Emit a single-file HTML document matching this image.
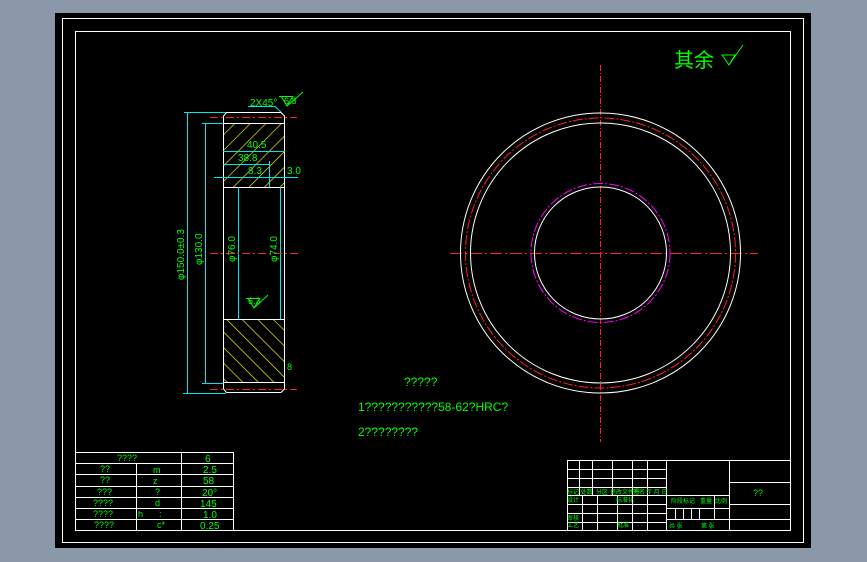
<!DOCTYPE html>
<html><head><meta charset="utf-8"><style>
html,body{margin:0;padding:0;background:#8a98aa;width:867px;height:562px;overflow:hidden}
svg{display:block}
text{font-family:"Liberation Sans Narrow","Liberation Sans","Noto Sans CJK SC",sans-serif;fill:#00ff00}
</style></head><body>
<svg width="867" height="562" viewBox="0 0 867 562">
<defs>
<pattern id="h" patternUnits="userSpaceOnUse" width="11" height="11" patternTransform="rotate(45)">
<line x1="0" y1="0" x2="0" y2="11" stroke="#ffff00" stroke-width="1.3"/>
</pattern>
<pattern id="h2" patternUnits="userSpaceOnUse" width="11" height="11" patternTransform="rotate(-45)">
<line x1="0" y1="0" x2="0" y2="11" stroke="#ffff00" stroke-width="1.3"/>
</pattern>
</defs>
<rect x="0" y="0" width="867" height="562" fill="#8a98aa"/>
<rect x="55" y="13" width="756" height="535" fill="#000"/>
<rect x="62.5" y="18.5" width="741" height="524" fill="none" stroke="#fff"/>
<rect x="75.5" y="31.5" width="715" height="499" fill="none" stroke="#fff"/>

<!-- side view -->
<rect x="223" y="123" width="62" height="64" fill="url(#h)"/>
<rect x="223" y="319" width="62" height="64" fill="url(#h2)"/>
<g stroke="#fff" fill="none" stroke-width="1">
<path d="M226.5 112.5 H281 L284.5 116 V389 L281 392.5 H226.5 L223.5 389 V116 Z"/>
<line x1="223" y1="123.5" x2="285" y2="123.5"/>
<line x1="223" y1="382.5" x2="285" y2="382.5"/>
<line x1="223" y1="187.5" x2="285" y2="187.5"/>
<line x1="223" y1="319.5" x2="285" y2="319.5"/>
</g>
<g stroke="#00e5ee" fill="none" stroke-width="1">
<line x1="238.5" y1="187" x2="238.5" y2="319"/>
<line x1="280.5" y1="187" x2="280.5" y2="319"/>
<line x1="223" y1="151.5" x2="285" y2="151.5"/>
<line x1="223" y1="164.5" x2="270" y2="164.5"/>
<line x1="214" y1="177.5" x2="298" y2="177.5"/>
<line x1="269.5" y1="161" x2="269.5" y2="187"/>
<line x1="187.5" y1="112" x2="187.5" y2="393"/>
<line x1="184" y1="112.5" x2="226" y2="112.5"/>
<line x1="183" y1="393.5" x2="226" y2="393.5"/>
<line x1="205.5" y1="123" x2="205.5" y2="383"/>
<line x1="202" y1="123.5" x2="223" y2="123.5"/>
<line x1="202" y1="383.5" x2="223" y2="383.5"/>
<line x1="248" y1="106.5" x2="275" y2="106.5"/>
<line x1="275" y1="106.5" x2="281" y2="112"/>
</g>
<line x1="210" y1="253.5" x2="300" y2="253.5" stroke="#ff2020" stroke-dasharray="8,3,2,3"/>
<line x1="210" y1="117.5" x2="297" y2="117.5" stroke="#ff2020" stroke-dasharray="8,3,2,3"/>
<line x1="210" y1="389.5" x2="297" y2="389.5" stroke="#ff2020" stroke-dasharray="8,3,2,3"/>
<g font-size="10">
<text x="250" y="106">2X45°</text>
<text x="284" y="104" font-size="9">6.3</text>
<text x="247" y="148">40.5</text>
<text x="238" y="161">38.8</text>
<text x="248" y="174">8.3</text>
<text x="287" y="174">3.0</text>
<text x="248" y="304" font-size="9">6.3</text>
<text x="287" y="370" font-size="9">8</text>
<text transform="translate(184,280) rotate(-90)">φ150.0±0.3</text>
<text transform="translate(202,265) rotate(-90)">φ130.0</text>
<text transform="translate(235,262) rotate(-90)">φ76.0</text>
<text transform="translate(277,262) rotate(-90)">φ74.0</text>
</g>
<path d="M281 96 L287 106 L293 96 M287 106 L303 92" stroke="#00ff00" fill="none"/>
<line x1="279" y1="96.5" x2="293" y2="96.5" stroke="#00ff00"/>
<path d="M248 298 L254 308 L260 298 M254 308 L268 295" stroke="#00ff00" fill="none"/>
<line x1="246" y1="298.5" x2="260" y2="298.5" stroke="#00ff00"/>

<!-- front view -->
<line x1="600.5" y1="65" x2="600.5" y2="442" stroke="#ff2020" stroke-dasharray="6,2,1,2"/>
<line x1="450" y1="253.5" x2="758" y2="253.5" stroke="#ff2020" stroke-dasharray="12,3,2,3"/>
<circle cx="600.5" cy="253" r="140" fill="none" stroke="#fff"/>
<circle cx="600.5" cy="253" r="130" fill="none" stroke="#fff"/>
<circle cx="600.5" cy="253" r="135" fill="none" stroke="#ff2020" stroke-dasharray="10,2,2,2"/>
<circle cx="600.5" cy="253" r="66" fill="none" stroke="#fff"/>
<circle cx="600.5" cy="253" r="69.5" fill="none" stroke="#ff00ff" stroke-dasharray="10,2,2,2"/>

<text x="674" y="67" font-size="20" font-family="Noto Sans CJK SC,sans-serif">其余</text>
<path d="M722 55 L729 65 L735 55 Z M729 65 L743 45" stroke="#00ff00" fill="none"/>

<g font-size="12">
<text x="404" y="386">?????</text>
<text x="358" y="411">1???????????58-62?HRC?</text>
<text x="358" y="436">2????????</text>
</g>

<!-- left table -->
<g stroke="#fff" fill="none">
<rect x="75.5" y="452.5" width="158" height="78"/>
<line x1="75" y1="463.5" x2="234" y2="463.5"/>
<line x1="75" y1="474.5" x2="234" y2="474.5"/>
<line x1="75" y1="486.5" x2="234" y2="486.5"/>
<line x1="75" y1="497.5" x2="234" y2="497.5"/>
<line x1="75" y1="508.5" x2="234" y2="508.5"/>
<line x1="75" y1="519.5" x2="234" y2="519.5"/>
<line x1="136.5" y1="463" x2="136.5" y2="530"/>
<line x1="181.5" y1="452" x2="181.5" y2="530"/>
</g>
<g font-size="9">
<text x="117" y="461">????</text><text x="205" y="462" font-size="10">6</text>
<text x="100" y="472">??</text><text x="153" y="473">m</text><text x="203" y="473" font-size="10">2.5</text>
<text x="100" y="483">??</text><text x="153" y="484" fill="#fff">z</text><text x="203" y="484" font-size="10">58</text>
<text x="97" y="495">???</text><text x="155" y="495">?</text><text x="202" y="496" font-size="10">20°</text>
<text x="93" y="506">????</text><text x="155" y="506">d</text><text x="200" y="507" font-size="10">145</text>
<text x="93" y="517">????</text><text x="138" y="517" fill="#fff">h</text><text x="159" y="517" fill="#fff">:</text><text x="203" y="518" font-size="10">1.0</text>
<text x="94" y="528">????</text><text x="157" y="528" fill="#fff">c*</text><text x="200" y="529" font-size="10">0.25</text>
</g>

<!-- right title block -->
<g stroke="#fff" fill="none">
<rect x="567.5" y="460.5" width="223" height="70"/>
<line x1="567" y1="469.5" x2="666" y2="469.5"/>
<line x1="567" y1="478.5" x2="666" y2="478.5"/>
<line x1="567" y1="487.5" x2="666" y2="487.5"/>
<line x1="567" y1="495.5" x2="729" y2="495.5"/>
<line x1="567" y1="504.5" x2="666" y2="504.5"/>
<line x1="567" y1="513.5" x2="666" y2="513.5"/>
<line x1="567" y1="522.5" x2="666" y2="522.5"/>
<line x1="579.5" y1="460" x2="579.5" y2="495"/>
<line x1="592.5" y1="460" x2="592.5" y2="495"/>
<line x1="612.5" y1="460" x2="612.5" y2="495"/>
<line x1="632.5" y1="460" x2="632.5" y2="530"/>
<line x1="647.5" y1="460" x2="647.5" y2="530"/>
<line x1="666.5" y1="460" x2="666.5" y2="530"/>
<line x1="729.5" y1="460" x2="729.5" y2="530"/>
<line x1="582.5" y1="495" x2="582.5" y2="530"/>
<line x1="597.5" y1="495" x2="597.5" y2="530"/>
<line x1="617.5" y1="495" x2="617.5" y2="530"/>
<line x1="666" y1="508.5" x2="729" y2="508.5"/>
<line x1="666" y1="519.5" x2="729" y2="519.5"/>
<line x1="675.5" y1="508" x2="675.5" y2="519"/>
<line x1="683.5" y1="508" x2="683.5" y2="519"/>
<line x1="691.5" y1="508" x2="691.5" y2="519"/>
<line x1="699.5" y1="508" x2="699.5" y2="519"/>
<line x1="714.5" y1="495" x2="714.5" y2="519"/>
<line x1="729" y1="482.5" x2="790" y2="482.5"/>
<line x1="729" y1="504.5" x2="790" y2="504.5"/>
<line x1="729" y1="519.5" x2="790" y2="519.5"/>
</g>
<g font-size="6">
<text x="567" y="494">标记 处数</text><text x="596" y="494">分区</text><text x="610" y="494">更改文件号</text><text x="633" y="494">签名</text><text x="646" y="494">年 月 日</text>
<text x="567" y="502">设计</text><text x="616" y="502">标准化</text>
<text x="567" y="520">审核</text><text x="567" y="527">工艺</text><text x="617" y="527">批准</text>
<text x="671" y="503">阶段标记</text><text x="700" y="503">重量</text><text x="715" y="503">比例</text>
<text x="669" y="528">共 张</text><text x="701" y="528">第 张</text>
</g>
<text x="753" y="496" font-size="9">??</text>
</svg>
</body></html>
